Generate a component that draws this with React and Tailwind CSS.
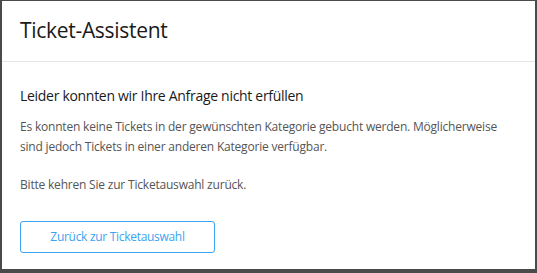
export default function App() {
  return (
    <div className="w-[537px] h-[273px] bg-[#4a4a4a] pl-[2px] pr-[2px] pt-[1px] pb-[4px]" style={{ fontFamily: '"Open Sans", sans-serif' }}>
      <div className="h-full bg-white flex flex-col">
        <div className="h-[61px] border-b border-[#e5e5e5] px-[18px] flex items-center">
          <h1 className="text-[21px] text-[#1a1a1a] tracking-[-0.3px]">Ticket-Assistent</h1>
        </div>
        <div className="pl-[18px] pr-[28px] pt-[24px]">
          <h2 className="text-[14px] text-[#1a1a1a] leading-[20px] tracking-[-0.3px]">Leider konnten wir Ihre Anfrage nicht erfüllen</h2>
          <p className="mt-[11px] text-[12px] leading-[20px] text-[#555] tracking-[-0.2px]">
            Es konnten keine Tickets in der gewünschten Kategorie gebucht werden. Möglicherweise sind jedoch Tickets in einer anderen Kategorie verfügbar.
          </p>
          <p className="mt-[18px] text-[12px] leading-[20px] text-[#555] tracking-[-0.2px]">Bitte kehren Sie zur Ticketauswahl zurück.</p>
          <button className="mt-[26px] w-[195px] h-[32px] border border-[#3aa3f2] rounded-[3px] text-[12px] tracking-[-0.3px] text-[#3aa3f2] bg-white">
            Zurück zur Ticketauswahl
          </button>
        </div>
      </div>
    </div>
  );
}
